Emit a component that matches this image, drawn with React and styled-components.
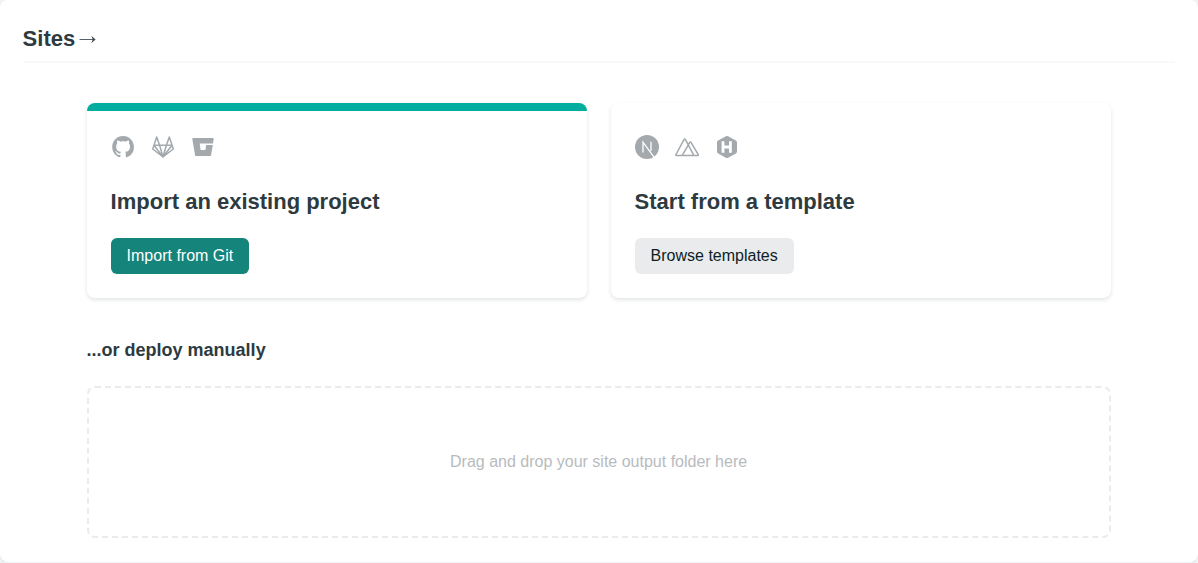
import React from "react";
import styled, { createGlobalStyle } from "styled-components";

const GlobalStyle = createGlobalStyle`
  * { box-sizing: border-box; }
  body {
    margin: 0;
    background: #eff3f3;
    color: #2d3b41;
    font-family: "Liberation Sans", Arial, sans-serif;
    font-size: 16px;
    line-height: 24px;
  }
`;

const Panel = styled.main`
  height: 562px;
  padding: 24px 23.4px 0 22.6px;
  background: #fff;
  border-radius: 8px;
  box-shadow: 0 1px 0 #dbe3e2;
`;

const Header = styled.header`
  display: flex;
  align-items: center;
  gap: 4px;
  height: 39px;
  padding-bottom: 7px;
  border-bottom: 2px solid #f9f9fa;
`;

const Title = styled.h1`
  margin: 0;
  font-size: 22px;
  line-height: 28px;
`;

const Content = styled.div`
  width: 1024px;
  margin: 40px auto 0;
`;

const Cards = styled.div`
  display: grid;
  grid-template-columns: 1fr 1fr;
  gap: 24px;
`;

const Card = styled.section`
  height: 195px;
  padding: ${(p) => (p.$accent ? "24px" : "32px")} 24px 24px;
  border-top: ${(p) => (p.$accent ? "8px solid #00ad9f" : "0")};
  border-radius: 8px;
  background: #fff;
  box-shadow: 0 2px 4px rgba(14, 30, 37, 0.12);
`;

const Icons = styled.div`
  display: flex;
  gap: 16px;
  height: 24px;
  color: #a3a9ac;
`;

const CardTitle = styled.h2`
  margin: 28px 0 22px;
  font-size: 22px;
  line-height: 29px;
`;

const Button = styled.button`
  height: 36px;
  padding: 0 16px;
  border: 0;
  border-radius: 6px;
  font: inherit;
  background: ${(p) => (p.$primary ? "#15847a" : "#e9ebed")};
  color: ${(p) => (p.$primary ? "#fff" : "#0e1e25")};
`;

const Subheading = styled.h3`
  margin: 40px 0 24px;
  font-size: 18px;
  line-height: 24px;
`;

const DropZone = styled.div`
  display: flex;
  align-items: center;
  justify-content: center;
  height: 152px;
  border: 2px dashed #e9ebed;
  border-radius: 8px;
  color: #b7bbbe;
`;

const Icon = ({ children }) => (
  <svg width="24" height="24" viewBox="0 0 24 24" fill="none">
    {children}
  </svg>
);

const GitHub = () => (
  <Icon>
    <path
      transform="translate(1.2 1.1) scale(1.36)"
      fill="currentColor"
      d="M8 0C3.58 0 0 3.58 0 8c0 3.54 2.29 6.53 5.47 7.59.4.07.55-.17.55-.38 0-.19-.01-.82-.01-1.49-2.01.37-2.53-.49-2.69-.94-.09-.23-.48-.94-.82-1.13-.28-.15-.68-.52-.01-.53.63-.01 1.08.58 1.23.82.72 1.21 1.87.87 2.33.66.07-.52.28-.87.51-1.07-1.78-.2-3.64-.89-3.64-3.95 0-.87.31-1.59.82-2.15-.08-.2-.36-1.02.08-2.12 0 0 .67-.21 2.2.82.64-.18 1.32-.27 2-.27s1.36.09 2 .27c1.53-1.04 2.2-.82 2.2-.82.44 1.1.16 1.92.08 2.12.51.56.82 1.27.82 2.15 0 3.07-1.87 3.75-3.65 3.95.29.25.54.73.54 1.48 0 1.07-.01 1.93-.01 2.2 0 .21.15.46.55.38A8.01 8.01 0 0 0 16 8c0-4.42-3.58-8-8-8z"
    />
  </Icon>
);

const GitLab = () => (
  <Icon>
    <path
      stroke="currentColor"
      strokeWidth="1.5"
      strokeLinejoin="round"
      d="M12 22 1.7 14 5.7 2 8.6 10.2H15.4L18.3 2 22.3 14ZM3 10.2H8.6L12 22 15.4 10.2H21M3 10.2 12 22 21 10.2"
    />
  </Icon>
);

const Bitbucket = () => (
  <Icon>
    <path
      fill="currentColor"
      d="M2 3H22a.7.7 0 0 1 .7.8L22 8.6H8.7L9.6 15H14.4L15.1 10H21.8L20 20.4a.8.8 0 0 1-.8.6H4.9a.8.8 0 0 1-.8-.6L1.3 3.8A.7.7 0 0 1 2 3Z"
    />
  </Icon>
);

const Next = () => (
  <Icon>
    <circle cx="12" cy="12" r="12" fill="currentColor" />
    <path stroke="#fff" strokeWidth="1.3" d="M8 17.4V7.2L19.2 22.4M16 6.8V16" />
  </Icon>
);

const Nuxt = () => (
  <Icon>
    <path
      stroke="currentColor"
      strokeWidth="1.5"
      strokeLinejoin="round"
      d="M7.5 20.5H1.4Q.5 20.5 1 19.5L9.1 4.4Q9.7 3.4 10.3 4.4L18.2 19.2Q18.7 20.5 17.5 20.5H23Q23.6 20.2 23.1 19.4L16 7.4Q15.4 6.5 14.8 7.4L7.8 19.4Q7.2 20.5 8.4 20.5H17.5"
    />
  </Icon>
);

const Hugo = () => (
  <Icon>
    <path
      fill="currentColor"
      d="M10.9 1.2Q12 .6 13.1 1.2L20.9 5.6Q22 6.2 22 7.4V16.6Q22 17.8 20.9 18.4L13.1 22.8Q12 23.4 10.9 22.8L3.1 18.4Q2 17.8 2 16.6V7.4Q2 6.2 3.1 5.6Z"
    />
    <path stroke="#fff" strokeWidth="2.8" d="M8 6.3V17.8M15.4 6.3V17.8M8 12H15.4" />
  </Icon>
);

const Arrow = () => (
  <svg width="18" height="10" viewBox="0 0 18 10" fill="none">
    <path stroke="#56636a" d="M.5 5.5H16" />
    <path fill="#3d4a50" d="M12.2 1.8 16.6 5.5 12.2 9.2 13.8 5.5Z" />
  </svg>
);

export default function App() {
  return (
    <>
      <GlobalStyle />
      <Panel>
        <Header>
          <Title>Sites</Title>
          <Arrow />
        </Header>
        <Content>
          <Cards>
            <Card $accent>
              <Icons>
                <GitHub />
                <GitLab />
                <Bitbucket />
              </Icons>
              <CardTitle>Import an existing project</CardTitle>
              <Button $primary>Import from Git</Button>
            </Card>
            <Card>
              <Icons>
                <Next />
                <Nuxt />
                <Hugo />
              </Icons>
              <CardTitle>Start from a template</CardTitle>
              <Button>Browse templates</Button>
            </Card>
          </Cards>
          <Subheading>...or deploy manually</Subheading>
          <DropZone>Drag and drop your site output folder here</DropZone>
        </Content>
      </Panel>
    </>
  );
}
